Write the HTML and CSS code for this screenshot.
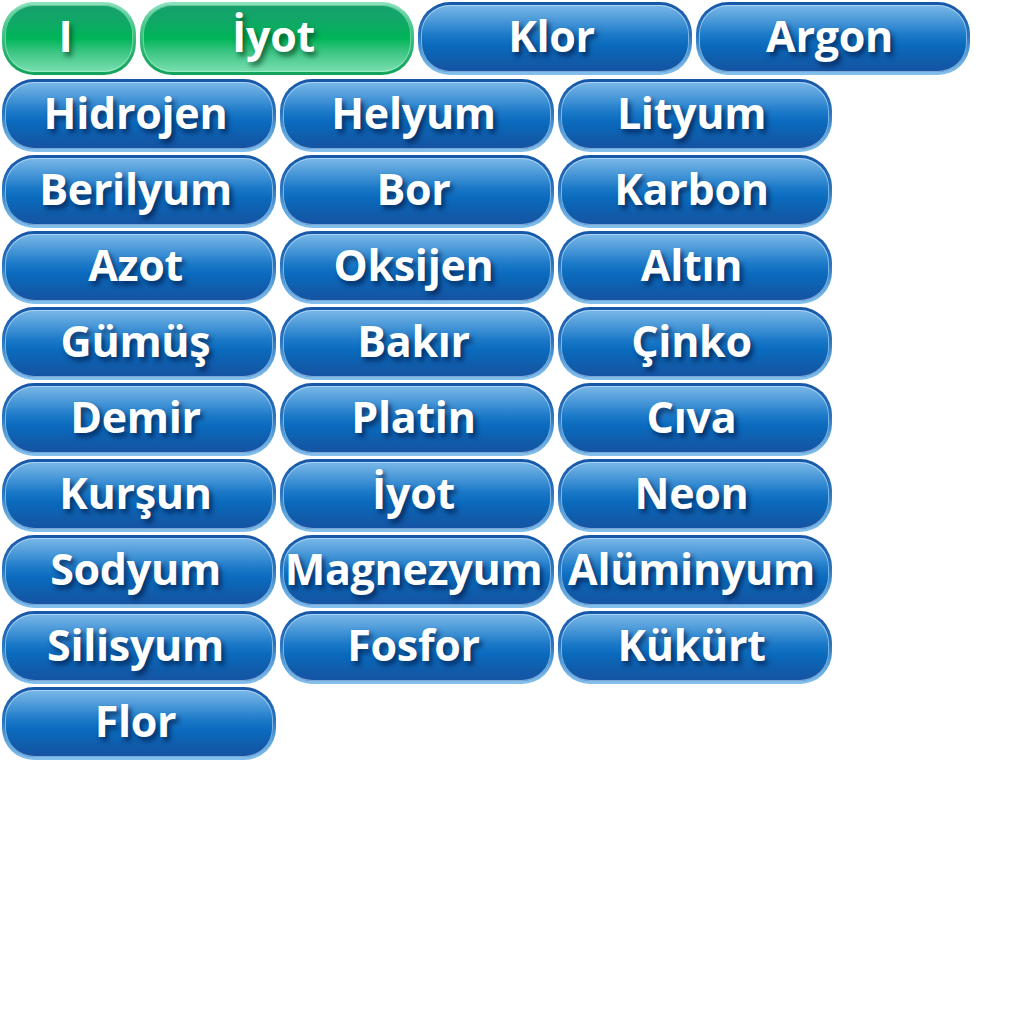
FILE: index.html
```html
<!DOCTYPE html>
<html lang="tr">
<head>
<meta charset="utf-8">
<title>Elementler</title>
<link rel="stylesheet" href="styles.css">
</head>
<body>
<div class="page">
  <div class="top-row">
    <div class="btn btn-green btn-small"><span class="inner"><span class="label">I</span></span></div>
    <div class="btn btn-green"><span class="inner"><span class="label">İyot</span></span></div>
    <div class="btn"><span class="inner"><span class="label">Klor</span></span></div>
    <div class="btn"><span class="inner"><span class="label">Argon</span></span></div>
  </div>
  <div class="grid">
    <div class="btn"><span class="inner"><span class="label">Hidrojen</span></span></div>
    <div class="btn"><span class="inner"><span class="label">Helyum</span></span></div>
    <div class="btn"><span class="inner"><span class="label">Lityum</span></span></div>
    <div class="btn"><span class="inner"><span class="label">Berilyum</span></span></div>
    <div class="btn"><span class="inner"><span class="label">Bor</span></span></div>
    <div class="btn"><span class="inner"><span class="label">Karbon</span></span></div>
    <div class="btn"><span class="inner"><span class="label">Azot</span></span></div>
    <div class="btn"><span class="inner"><span class="label">Oksijen</span></span></div>
    <div class="btn"><span class="inner"><span class="label">Altın</span></span></div>
    <div class="btn"><span class="inner"><span class="label">Gümüş</span></span></div>
    <div class="btn"><span class="inner"><span class="label">Bakır</span></span></div>
    <div class="btn"><span class="inner"><span class="label">Çinko</span></span></div>
    <div class="btn"><span class="inner"><span class="label">Demir</span></span></div>
    <div class="btn"><span class="inner"><span class="label">Platin</span></span></div>
    <div class="btn"><span class="inner"><span class="label">Cıva</span></span></div>
    <div class="btn"><span class="inner"><span class="label">Kurşun</span></span></div>
    <div class="btn"><span class="inner"><span class="label">İyot</span></span></div>
    <div class="btn"><span class="inner"><span class="label">Neon</span></span></div>
    <div class="btn"><span class="inner"><span class="label">Sodyum</span></span></div>
    <div class="btn"><span class="inner"><span class="label">Magnezyum</span></span></div>
    <div class="btn"><span class="inner"><span class="label">Alüminyum</span></span></div>
    <div class="btn"><span class="inner"><span class="label">Silisyum</span></span></div>
    <div class="btn"><span class="inner"><span class="label">Fosfor</span></span></div>
    <div class="btn"><span class="inner"><span class="label">Kükürt</span></span></div>
    <div class="btn"><span class="inner"><span class="label">Flor</span></span></div>
  </div>
</div>
</body>
</html>
```
FILE: styles.css
```css
* { box-sizing: border-box; }

html, body {
  margin: 0;
  padding: 0;
  background: #ffffff;
}

.page {
  padding: 2px 0 0 2px;
  font-family: "Open Sans", "Liberation Sans", sans-serif;
}

.top-row {
  display: flex;
  gap: 4px;
  margin-bottom: 4px;
}

.grid {
  display: grid;
  grid-template-columns: repeat(3, 274px);
  grid-auto-rows: 73px;
  column-gap: 4px;
  row-gap: 3px;
}

.btn {
  width: 274px;
  height: 73px;
  border-radius: 32px;
  padding: 3px;
  background: linear-gradient(to bottom, #1656a6 0%, #2a73be 45%, #5ea6de 75%, #84c0ec 100%);
}

.btn-small { width: 134px; }

.inner {
  display: flex;
  align-items: center;
  justify-content: center;
  height: 100%;
  padding-right: 7px;
  border-radius: 29px;
  background: linear-gradient(to bottom, #7ab8e8 0%, #4c9ad9 22%, #1b79c8 45%, #0a6abd 60%, #115ba9 85%, #1553a3 100%);
  box-shadow: inset 0 0 0 1px rgba(210, 235, 255, 0.55);
}

.label {
  color: #ffffff;
  font-weight: 700;
  font-size: 43px;
  line-height: 1;
  letter-spacing: -0.3px;
  white-space: nowrap;
  text-shadow: 3px 4px 5px rgba(0, 25, 70, 0.7);
  margin-top: -7px;
}

.btn-green {
  background: linear-gradient(to bottom, #8fe3bf 0%, #4fc98f 30%, #27b06c 70%, #12a35a 100%);
}

.btn-green .inner {
  background: linear-gradient(to bottom, #15a06b 0%, #10a866 25%, #00b558 50%, #3cc583 70%, #7adfb0 100%);
  box-shadow: inset 0 0 0 1px rgba(200, 255, 225, 0.45);
}

.btn-green .label {
  text-shadow: 3px 4px 5px rgba(0, 60, 30, 0.65);
}
```
